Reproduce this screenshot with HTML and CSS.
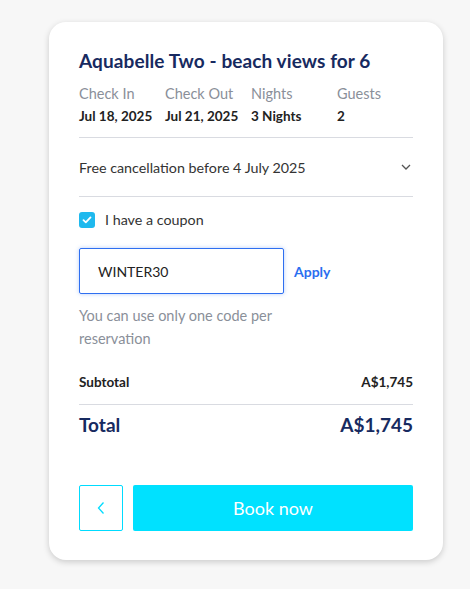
FILE: index.html
```html
<!DOCTYPE html>
<html>
<head>
<meta charset="utf-8">
<link rel="stylesheet" href="styles.css">
</head>
<body>
<div class="card">
  <h1 class="title">Aquabelle Two - beach views for 6</h1>
  <div class="stay">
    <div class="col"><div class="lbl">Check In</div><div class="val">Jul 18, 2025</div></div>
    <div class="col"><div class="lbl">Check Out</div><div class="val">Jul 21, 2025</div></div>
    <div class="col"><div class="lbl">Nights</div><div class="val">3 Nights</div></div>
    <div class="col"><div class="lbl">Guests</div><div class="val">2</div></div>
  </div>
  <div class="cancel">
    <span>Free cancellation before 4 July 2025</span>
    <svg class="chev" width="10" height="6" viewBox="0 0 10 6"><path d="M1 1l4 4 4-4" fill="none" stroke="#555" stroke-width="1.3"/></svg>
  </div>
  <label class="coupon">
    <span class="check"><svg width="10" height="8" viewBox="0 0 10 8"><path d="M1.5 4.2l2.3 2.2 4.7-5" fill="none" stroke="#fff" stroke-width="1.8" stroke-linecap="round" stroke-linejoin="round"/></svg></span>
    <span>I have a coupon</span>
  </label>
  <div class="code-row">
    <div class="input">WINTER30</div>
    <span class="apply">Apply</span>
  </div>
  <p class="help">You can use only one code per reservation</p>
  <div class="sub"><span>Subtotal</span><span>A$1,745</span></div>
  <div class="total"><span>Total</span><span>A$1,745</span></div>
  <div class="actions">
    <button class="back"><svg width="8" height="14" viewBox="0 0 8 14"><path d="M6.5 1.5L1.5 7l5 5.5" fill="none" stroke="#00dcff" stroke-width="1.3"/></svg></button>
    <button class="book">Book now</button>
  </div>
</div>
</body>
</html>
```
FILE: styles.css
```css
html, body { margin: 0; padding: 0; }
body {
  background: #f7f7f7;
  font-family: "Lato", "Open Sans", sans-serif;
  width: 470px;
  height: 589px;
  overflow: hidden;
}
.card {
  margin: 22px 0 0 49px;
  width: 394px;
  height: 538px;
  box-sizing: border-box;
  background: #fff;
  border-radius: 17px;
  box-shadow: 0 2px 6px rgba(0,0,0,0.18);
  padding: 27px 30px 0 30px;
}
.title {
  margin: 0;
  font-size: 19px;
  font-weight: 700;
  color: #172a60;
  line-height: 24px;
  letter-spacing: 0.1px;
}
.stay {
  display: grid;
  grid-template-columns: 86px 86px 86px 1fr;
  margin-top: 11px;
  padding-bottom: 11px;
  border-bottom: 1px solid #d9dbe1;
}
.lbl { font-size: 14.5px; color: #8a8f99; line-height: 20px; }
.val { font-size: 13.5px; font-weight: 700; color: #222; line-height: 20px; margin-top: 2px; }
.cancel {
  display: flex;
  justify-content: space-between;
  align-items: center;
  height: 58px;
  border-bottom: 1px solid #d9dbe1;
  font-size: 14.3px;
  color: #333;
}
.chev { margin-right: 2px; }
.coupon {
  display: flex;
  align-items: center;
  gap: 10px;
  margin-top: 14px;
  font-size: 14.3px;
  color: #333;
}
.check {
  width: 16px; height: 16px;
  border-radius: 3px;
  background: #1fb9ee;
  display: flex; align-items: center; justify-content: center;
}
.code-row {
  display: flex;
  align-items: center;
  margin-top: 20px;
}
.input {
  width: 205px;
  height: 46px;
  box-sizing: border-box;
  border: 1px solid #2f6ff0;
  border-radius: 2px;
  box-shadow: 0 0 4px rgba(47,111,240,0.35);
  padding-left: 18px;
  display: flex; align-items: center;
  font-size: 14px;
  color: #222;
}
.apply {
  margin-left: 10px;
  font-size: 14px;
  font-weight: 700;
  color: #2a6ef0;
}
.help {
  margin: 10px 0 0 0;
  width: 215px;
  font-size: 14.5px;
  line-height: 23px;
  color: #8a8f99;
}
.sub {
  display: flex;
  justify-content: space-between;
  margin-top: 22px;
  padding-bottom: 12px;
  border-bottom: 1px solid #d9dbe1;
  font-size: 13.5px;
  font-weight: 700;
  color: #222;
  line-height: 20px;
}
.total {
  display: flex;
  justify-content: space-between;
  margin-top: 8px;
  font-size: 19px;
  font-weight: 700;
  color: #172a60;
  line-height: 24px;
}
.actions {
  display: flex;
  gap: 10px;
  margin-top: 48px;
}
.actions button {
  height: 46px;
  border-radius: 2px;
  font-family: inherit;
  cursor: pointer;
}
.back {
  width: 44px;
  border: 1px solid #00dcff;
  background: #fff;
  display: flex; align-items: center; justify-content: center;
  padding: 0;
}
.book {
  flex: 1;
  border: none;
  background: #00e1ff;
  color: #fff;
  font-size: 18px;
}
```
